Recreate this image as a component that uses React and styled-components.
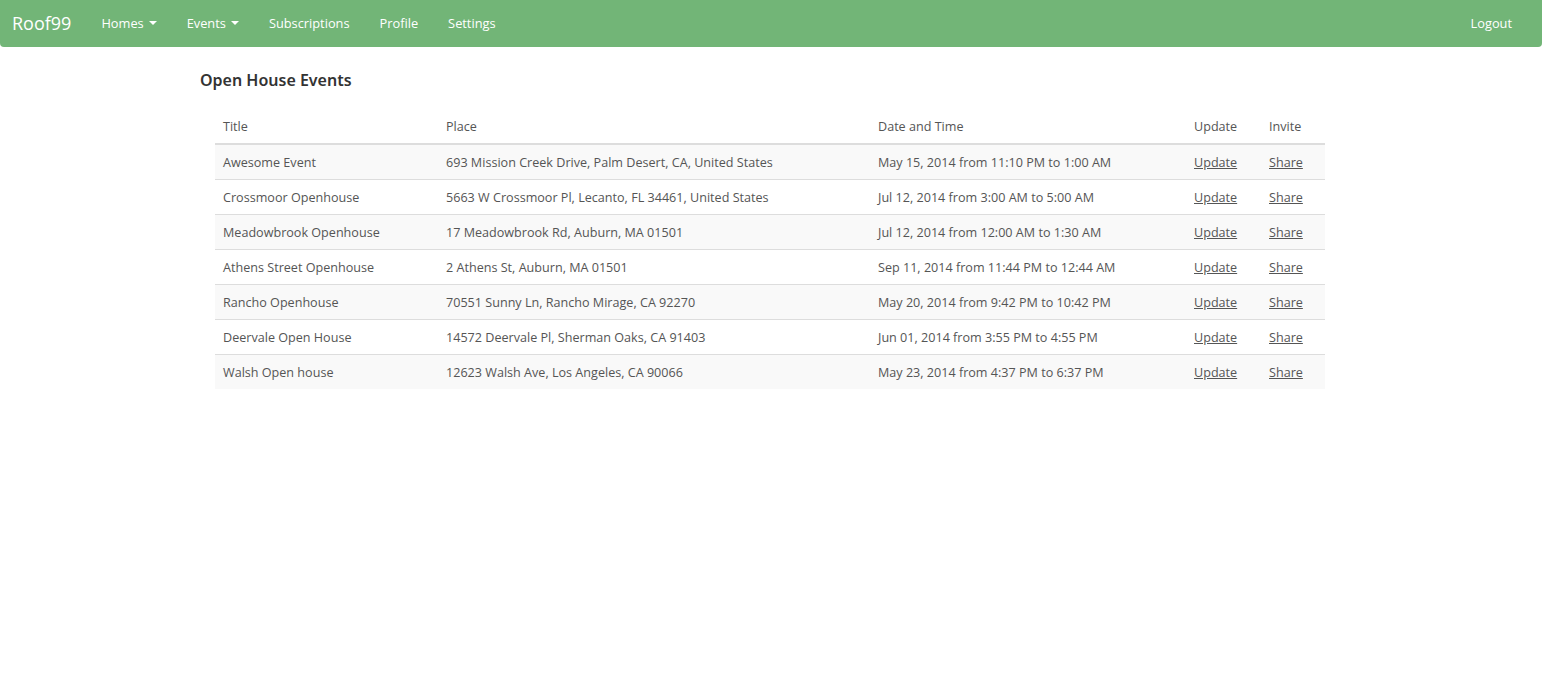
import React from 'react';
import styled, { createGlobalStyle } from 'styled-components';

const GlobalStyle = createGlobalStyle`
body {
  margin: 0;
  background: #fff;
  font-family: "Open Sans", "Liberation Sans", sans-serif;
  font-size: 13px;
  color: #555;
}
`;

const Navbar = styled.nav`
height: 47px;
background-color: #72b577;
border-radius: 0 0 4px 4px;
display: flex;
align-items: center;
padding: 0 15px 2px 12px;
box-sizing: border-box;
`;

const Brand = styled.a`
color: #fff;
font-size: 18px;
margin-right: 15px;
text-decoration: none;
`;

const NavItem = styled.a`
color: #fff;
font-size: 12.8px;
padding: 0 15px;
text-decoration: none;
display: flex;
align-items: center;
`;

const Caret = styled.span`
display: inline-block;
width: 0;
height: 0;
margin-left: 5px;
border-top: 4px solid #fff;
border-left: 4px solid transparent;
border-right: 4px solid transparent;
`;

const Spacer = styled.div`
flex: 1;
`;

const Container = styled.main`
width: 1140px;
margin: 0 auto;
padding: 22px 0 0;
box-sizing: border-box;
`;

const Heading = styled.h3`
margin: 0 0 17px -1px;
font-family: "Noto Sans", "Open Sans", sans-serif;
font-weight: 600;
font-size: 16px;
color: #333;
`;

const Table = styled.table`
width: 1110px;
margin-left: 14px;
border-collapse: collapse;
table-layout: fixed;
font-size: 12.6px;
`;

const Th = styled.th`
box-sizing: border-box;
text-align: left;
font-weight: 400;
padding: 9px 8px 8px;
height: 36px;
border-bottom: 2px solid #ddd;
width: ${({ w }) => w}px;
`;

const Row = styled.tr`
background-color: ${({ striped }) => (striped ? '#f9f9f9' : '#fff')};
border-top: ${({ first }) => (first ? 'none' : '1px solid #ddd')};
`;

const Td = styled.td`
padding: 0 8px;
height: 34px;
white-space: nowrap;
`;

const Link = styled.a`
color: #555;
text-decoration: underline;
`;

const events = [
  ['Awesome Event', '693 Mission Creek Drive, Palm Desert, CA, United States', 'May 15, 2014 from 11:10 PM to 1:00 AM'],
  ['Crossmoor Openhouse', '5663 W Crossmoor Pl, Lecanto, FL 34461, United States', 'Jul 12, 2014 from 3:00 AM to 5:00 AM'],
  ['Meadowbrook Openhouse', '17 Meadowbrook Rd, Auburn, MA 01501', 'Jul 12, 2014 from 12:00 AM to 1:30 AM'],
  ['Athens Street Openhouse', '2 Athens St, Auburn, MA 01501', 'Sep 11, 2014 from 11:44 PM to 12:44 AM'],
  ['Rancho Openhouse', '70551 Sunny Ln, Rancho Mirage, CA 92270', 'May 20, 2014 from 9:42 PM to 10:42 PM'],
  ['Deervale Open House', '14572 Deervale Pl, Sherman Oaks, CA 91403', 'Jun 01, 2014 from 3:55 PM to 4:55 PM'],
  ['Walsh Open house', '12623 Walsh Ave, Los Angeles, CA 90066', 'May 23, 2014 from 4:37 PM to 6:37 PM'],
];

export default function App() {
  return (
    <>
      <GlobalStyle />
      <Navbar>
        <Brand href="#">Roof99</Brand>
        <NavItem href="#">Homes<Caret /></NavItem>
        <NavItem href="#">Events<Caret /></NavItem>
        <NavItem href="#">Subscriptions</NavItem>
        <NavItem href="#">Profile</NavItem>
        <NavItem href="#">Settings</NavItem>
        <Spacer />
        <NavItem href="#">Logout</NavItem>
      </Navbar>
      <Container>
        <Heading>Open House Events</Heading>
        <Table>
          <thead>
            <tr>
              <Th w={223}>Title</Th>
              <Th w={432}>Place</Th>
              <Th w={316}>Date and Time</Th>
              <Th w={75}>Update</Th>
              <Th w={64}>Invite</Th>
            </tr>
          </thead>
          <tbody>
            {events.map(([title, place, date], i) => (
              <Row key={title} striped={i % 2 === 0} first={i === 0}>
                <Td>{title}</Td>
                <Td>{place}</Td>
                <Td>{date}</Td>
                <Td><Link href="#">Update</Link></Td>
                <Td><Link href="#">Share</Link></Td>
              </Row>
            ))}
          </tbody>
        </Table>
      </Container>
    </>
  );
}
